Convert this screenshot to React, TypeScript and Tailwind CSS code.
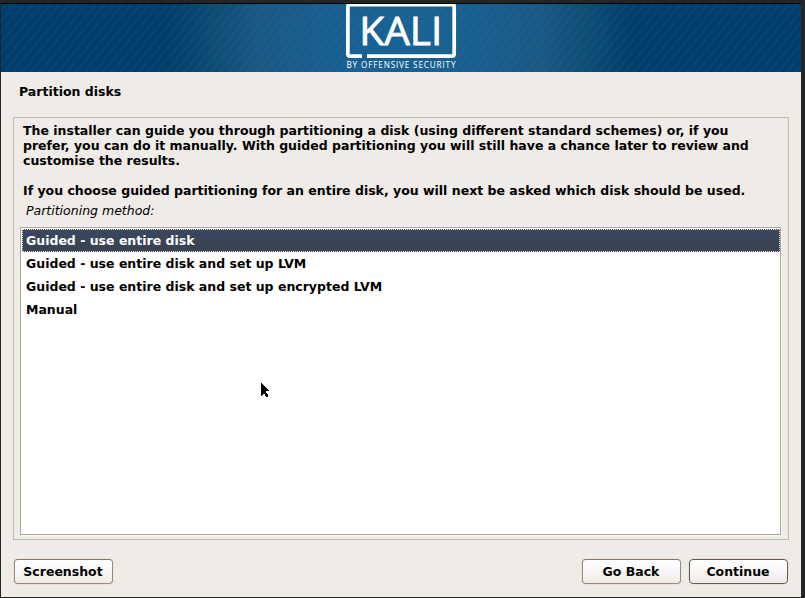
import React from "react";

const methods = [
  "Guided - use entire disk",
  "Guided - use entire disk and set up LVM",
  "Guided - use entire disk and set up encrypted LVM",
  "Manual",
];

function Banner() {
  return (
    <header className="h-[68px] shrink-0">
      <svg width="800" height="68" viewBox="1 4 800 68" className="block">
        <defs>
          <radialGradient id="glow" gradientUnits="userSpaceOnUse" cx="401" cy="38" r="234">
            <stop offset="0" stopColor="#186294" />
            <stop offset="0.3" stopColor="#185f91" />
            <stop offset="0.62" stopColor="#1a5784" />
            <stop offset="0.82" stopColor="#0c4b73" />
            <stop offset="1" stopColor="#003d6b" />
          </radialGradient>
          <pattern id="stripes" width="9" height="11" patternUnits="userSpaceOnUse">
            <path d="M-2.25 13.75L11.25 -2.75M-4.5 5.5L4.5 -5.5M4.5 16.5L13.5 5.5" stroke="#2a86a0" strokeOpacity="0.09" strokeWidth="2.6" />
          </pattern>
        </defs>
        <rect x="1" y="4" width="800" height="68" fill="url(#glow)" />
        <rect x="1" y="4" width="800" height="68" fill="url(#stripes)" />
        <path d="M362 56.2H350Q347.9 56.2 347.9 54V7Q347.9 4.6 350 4.6H452Q454.2 4.6 454.2 7V54Q454.2 56.2 452 56.2H367" fill="none" stroke="#fff" strokeWidth="3.7" />
        <text x="359.3" y="44.6" textLength="83" lengthAdjust="spacingAndGlyphs" fill="#fff" stroke="#fff" strokeWidth="0.8" fontSize="38.5" fontFamily="Open Sans, sans-serif">KALI</text>
        <text x="346.5" y="67.5" textLength="109" fill="#fff" fontSize="8.2" fontFamily="Open Sans, sans-serif">BY OFFENSIVE SECURITY</text>
      </svg>
    </header>
  );
}

function Button({ label, primary = false }: { label: string; primary?: boolean }) {
  return (
    <button
      className={`flex h-[25px] w-[99px] items-center justify-center rounded-[4px] border bg-linear-to-b from-white via-[#f9f7f6] to-[#eeebe7] pr-px font-bold whitespace-nowrap shadow-[0_0_0_1px_#e8e2da] ${
        primary ? "border-[#665a50]" : "border-[#9b8b78] border-t-[#84796a]"
      }`}
    >
      {label}
    </button>
  );
}

export default function App() {
  return (
    <div className="relative h-[598px] w-[805px] overflow-hidden bg-[#242626] pt-[3px] pr-1 pb-px pl-px font-['DejaVu_Sans',sans-serif] text-[12.5px] leading-[15px] text-black">
      <main className="flex h-[594px] w-[800px] flex-col border-t border-black bg-[#efebe7]">
        <Banner />
        <h1 className="mt-3 ml-[18px] font-bold">Partition disks</h1>
        <section className="mt-[18px] ml-3 flex h-[423px] w-[776px] flex-col border border-[#c4b8aa] pt-[5px] pl-[6px]">
          <p className="pl-[3px] font-bold whitespace-nowrap">
            The installer can guide you through partitioning a disk (using different standard schemes) or, if you
            <br />
            prefer, you can do it manually. With guided partitioning you will still have a chance later to review and
            <br />
            customise the results.
            <br />
            <br />
            If you choose guided partitioning for an entire disk, you will next be asked which disk should be used.
          </p>
          <p className="mt-[5px] pl-[6px] italic">Partitioning method:</p>
          <ul className="mt-[9px] h-[308px] w-[761px] border border-[#b5a691] bg-white pt-px pl-px shadow-[1px_1px_0_#faf8f6]">
            {methods.map((label, i) => (
              <li
                key={label}
                className={`flex h-[23px] w-[758px] items-center pl-1 font-bold ${
                  i === 0 ? "bg-linear-to-b from-[#3a4762] to-[#39424d] text-white outline-1 -outline-offset-1 outline-dotted outline-[#dfe0e2]" : ""
                }`}
              >
                {label}
              </li>
            ))}
          </ul>
        </section>
        <footer className="mt-[19px] flex pl-[13px]">
          <Button label="Screenshot" />
          <div className="mr-2 ml-[469px]">
            <Button label="Go Back" />
          </div>
          <Button label="Continue" primary />
        </footer>
      </main>
      <svg className="absolute top-[382px] left-[260px]" width="10" height="17" viewBox="0 0 10 17" shapeRendering="crispEdges">
        <path d="M1 1V14L4 11L6 15H8V13L6 10V9H9V8Z" fill="#000" />
      </svg>
    </div>
  );
}
